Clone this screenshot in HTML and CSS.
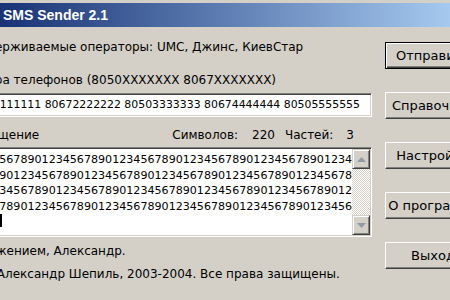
FILE: index.html
```html
<!DOCTYPE html>
<html lang="ru">
<head>
    <meta charset="UTF-8">
    <title>SMS Sender 2.1</title>
    <link rel="stylesheet" href="styles.css">
</head>
<body>
    <div class="window">
        <div class="titlebar">
            <span class="app-icon"></span>
            <span class="title">SMS Sender 2.1</span>
        </div>
        <div class="client">
            <div class="main">
                <p class="label first">Поддерживаемые операторы: UMC, Джинс, КиевСтар</p>
                <p class="label">Номера телефонов (8050XXXXXXX 8067XXXXXXX)</p>
                <div class="edit">80501111111 80672222222 80503333333 80674444444 80505555555</div>
                <div class="msg-head">
                    <span class="label">Сообщение</span>
                    <span class="counters">
                        <span>Символов:</span><span class="num">220</span>
                        <span class="parts">Частей:</span><span class="num last">3</span>
                    </span>
                </div>
                <div class="memo">
                    <div class="memo-text">123456789012345678901234567890123456789012345678901234
567890123456789012345678901234567890123456789012345678
901234567890123456789012345678901234567890123456789012
345678901234567890123456789012345678901234567890123456
7890<span class="caret"></span></div>
                    <div class="scrollbar">
                        <div class="sb-btn">
                            <svg width="9" height="5" viewBox="0 0 9 5"><polygon points="4.5,0 9,5 0,5" fill="#8e9aa8"/></svg>
                        </div>
                        <div class="sb-track"></div>
                        <div class="sb-btn">
                            <svg width="9" height="5" viewBox="0 0 9 5"><polygon points="0,0 9,0 4.5,5" fill="#8e9aa8"/></svg>
                        </div>
                    </div>
                </div>
                <p class="label status">С уважением, Александр.</p>
                <p class="label status copyright">(c) Александр Шепиль, 2003-2004. Все права защищены.</p>
            </div>
            <div class="buttons">
                <button class="btn default">Отправить</button>
                <button class="btn">Справочник</button>
                <button class="btn">Настройки</button>
                <button class="btn">О программе</button>
                <button class="btn">Выход</button>
            </div>
        </div>
    </div>
</body>
</html>
```

FILE: styles.css
```css
body {
    margin: 0;
    overflow: hidden;
    background: #d4d0c8;
    font-family: "DejaVu Sans", Verdana, sans-serif;
    font-size: 12px;
    color: #000;
}
.window {
    margin-left: -47px;
    width: 540px;
    height: 320px;
    background: #d4d0c8;
    border: 3px solid #d4d0c8;
    box-shadow: inset 1px 1px #fff;
}
.titlebar {
    display: flex;
    align-items: center;
    height: 24px;
    padding-left: 25px;
    background: linear-gradient(to right, #0a246a, #a6caf0 92%);
}
.app-icon {
    width: 16px;
    height: 16px;
    margin-right: 6px;
}
.title {
    color: #fff;
    font-family: "Liberation Sans", Arial, sans-serif;
    font-weight: bold;
    font-size: 14px;
}
.client {
    display: flex;
    align-items: flex-start;
    gap: 13px;
    padding-left: 6px;
}
.main {
    width: 410px;
    display: flex;
    flex-direction: column;
}
.label {
    margin: 0;
    line-height: 16px;
}
.first {
    margin-top: 12px;
}
.label + .label {
    margin-top: 17px;
}
.edit {
    margin-top: 5px;
    height: 22px;
    line-height: 22px;
    padding-left: 2px;
    font-size: 10.9px;
    background: #fff;
    border: 1px solid;
    border-color: #808080 #fff #fff #808080;
    box-shadow: inset 1px 1px #404040, inset -1px -1px #d4d0c8;
    white-space: pre;
    overflow: hidden;
}
.msg-head {
    display: flex;
    margin-top: 10px;
    line-height: 16px;
}
.msg-head .label {
    padding-left: 5px;
}
.counters {
    margin-left: auto;
    padding-right: 18px;
    display: flex;
}
.num {
    margin-left: 14px;
}
.parts {
    margin-left: 10px;
}
.num.last {
    margin-left: 13px;
}
.memo {
    display: flex;
    margin-top: 4px;
    height: 86px;
    background: #fff;
    border: 1px solid;
    border-color: #808080 #fff #fff #808080;
    box-shadow: inset 1px 1px #404040, inset -1px -1px #d4d0c8;
    padding: 1px;
}
.memo-text {
    flex: 1;
    padding: 3px 0 0 7px;
    font-size: 11.1px;
    line-height: 15.5px;
    white-space: pre;
    overflow: hidden;
}
.caret {
    display: inline-block;
    width: 2px;
    height: 13px;
    margin-left: 1px;
    vertical-align: -2px;
    background: #000;
}
.scrollbar {
    width: 18px;
    display: flex;
    flex-direction: column;
}
.sb-btn {
    height: 18px;
    display: flex;
    align-items: center;
    justify-content: center;
    background: #d4d0c8;
    border: 1px solid;
    border-color: #d4d0c8 #404040 #404040 #d4d0c8;
    box-shadow: inset 1px 1px #fff, inset -1px -1px #808080;
}
.sb-track {
    flex: 1;
    background-color: #fff;
    background-image: repeating-conic-gradient(#d4d0c8 0 25%, #fff 0 50%);
    background-size: 2px 2px;
}
.status {
    margin-top: 6px;
}
.label.copyright {
    margin-top: 7px;
    padding-left: 15px;
}
.buttons {
    display: flex;
    flex-direction: column;
    gap: 23px;
    padding-top: 15px;
}
.btn {
    width: 96px;
    height: 27px;
    padding: 0;
    font-family: inherit;
    font-size: 13px;
    color: #000;
    background: #d4d0c8;
    border: 1px solid;
    border-color: #fff #404040 #404040 #fff;
    box-shadow: inset -1px -1px #808080, inset 1px 1px #d4d0c8;
    white-space: nowrap;
}
.btn.default {
    border-color: #000;
    box-shadow: inset 1px 1px #fff, inset -1px -1px #404040, inset -2px -2px #808080;
}
```
